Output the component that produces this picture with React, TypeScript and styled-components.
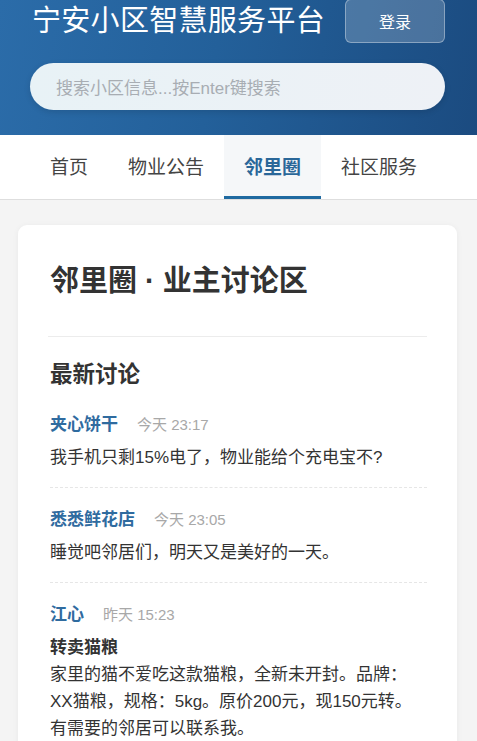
import React from "react";
import styled, { createGlobalStyle } from "styled-components";

const Global = createGlobalStyle`
  html, body { margin: 0; padding: 0; background: #f4f4f4; }
  body { font-family: "Liberation Sans", "Noto Sans CJK SC", sans-serif; color: #333; }
  * { box-sizing: border-box; }
`;

const Page = styled.div`
  width: 477px;
  height: 741px;
  background: #f4f4f4;
  overflow: hidden;
`;

const Header = styled.header`
  background: linear-gradient(100deg, #2b6ca9 0%, #23609a 45%, #1b4b80 100%);
  padding: 0 32px 25px 30px;
`;

const TitleRow = styled.div`
  display: flex;
  align-items: center;
  justify-content: space-between;
  height: 44px;
`;

const SiteTitle = styled.h1`
  margin: -2px 0 0 2px;
  font-size: 29px;
  font-weight: 400;
  line-height: 44px;
  color: #fff;
  letter-spacing: 0.3px;
`;

const LoginButton = styled.button`
  width: 100px;
  height: 44px;
  margin-top: -3px;
  border: 1px solid rgba(255, 255, 255, 0.35);
  border-radius: 6px;
  background: rgba(255, 255, 255, 0.2);
  color: #fff;
  font-family: inherit;
  font-size: 16px;
  padding: 0;
`;

const Search = styled.div`
  margin-top: 19px;
  height: 47px;
  border-radius: 24px;
  background: linear-gradient(90deg, #e8f2f6, #eef1f6);
  box-shadow: 0 2px 6px rgba(0, 0, 0, 0.12);
  display: flex;
  align-items: center;
  padding-left: 26px;
  font-size: 17px;
  color: #a8adb3;
`;

const Nav = styled.nav`
  display: flex;
  background: #fff;
  padding-left: 30px;
  border-bottom: 1px solid #dedede;
`;

const Tab = styled.div<{ $active?: boolean }>`
  height: 64px;
  padding: 0 20px;
  display: flex;
  align-items: center;
  font-size: 19px;
  color: ${(p) => (p.$active ? "#2a6799" : "#444")};
  font-weight: ${(p) => (p.$active ? 700 : 400)};
  background: ${(p) => (p.$active ? "#f5f7f9" : "transparent")};
  border-bottom: 3px solid ${(p) => (p.$active ? "#1f6aa1" : "transparent")};
`;

const Main = styled.main`
  padding: 25px 20px 0 18px;
`;

const Card = styled.section`
  background: #fff;
  border-radius: 9px;
  box-shadow: 0 1px 6px rgba(0, 0, 0, 0.05);
  padding: 36px 30px 20px 32px;
`;

const CardTitle = styled.h2`
  margin: 0;
  font-size: 29px;
  line-height: 40px;
  font-weight: 700;
  color: #333;
`;

const Divider = styled.hr`
  margin: 35px 0 0 -2px;
  border: none;
  border-top: 1px solid #ececec;
`;

const SectionTitle = styled.h3`
  margin: 22px 0 0;
  font-size: 22.5px;
  line-height: 32px;
  font-weight: 700;
  color: #333;
`;

const PostList = styled.div`
  margin-top: 21px;
`;

const Post = styled.article<{ $first?: boolean; $last?: boolean }>`
  padding: ${(p) => (p.$first ? "0" : "19px")} 0 16px;
  border-bottom: ${(p) => (p.$last ? "none" : "1px dashed #e6e6e6")};
`;

const Meta = styled.div`
  display: flex;
  align-items: baseline;
  gap: 19px;
  line-height: 26px;
`;

const Author = styled.span`
  font-size: 17px;
  font-weight: 700;
  color: #2f6b9f;
`;

const Time = styled.span`
  font-size: 15px;
  color: #a8a8a8;
`;

const Body = styled.div`
  margin-top: 6px;
  font-size: 17px;
  line-height: 27px;
  color: #333;
`;

const PostHeading = styled.div`
  font-weight: 700;
  color: #333;
`;

type PostData = {
  author: string;
  time: string;
  heading?: string;
  text: string;
};

const posts: PostData[] = [
  { author: "夹心饼干", time: "今天 23:17", text: "我手机只剩15%电了，物业能给个充电宝不?" },
  { author: "悉悉鲜花店", time: "今天 23:05", text: "睡觉吧邻居们，明天又是美好的一天。" },
  {
    author: "江心",
    time: "昨天 15:23",
    heading: "转卖猫粮",
    text: "家里的猫不爱吃这款猫粮，全新未开封。品牌：XX猫粮，规格：5kg。原价200元，现150元转。有需要的邻居可以联系我。",
  },
];

const tabs = ["首页", "物业公告", "邻里圈", "社区服务"];

export default function App() {
  return (
    <Page>
      <Global />
      <Header>
        <TitleRow>
          <SiteTitle>宁安小区智慧服务平台</SiteTitle>
          <LoginButton>登录</LoginButton>
        </TitleRow>
        <Search>搜索小区信息...按Enter键搜索</Search>
      </Header>
      <Nav>
        {tabs.map((t) => (
          <Tab key={t} $active={t === "邻里圈"}>
            {t}
          </Tab>
        ))}
      </Nav>
      <Main>
        <Card>
          <CardTitle>邻里圈 · 业主讨论区</CardTitle>
          <Divider />
          <SectionTitle>最新讨论</SectionTitle>
          <PostList>
            {posts.map((p, i) => (
              <Post key={i} $first={i === 0} $last={i === posts.length - 1}>
                <Meta>
                  <Author>{p.author}</Author>
                  <Time>{p.time}</Time>
                </Meta>
                <Body>
                  {p.heading && <PostHeading>{p.heading}</PostHeading>}
                  {p.text}
                </Body>
              </Post>
            ))}
          </PostList>
        </Card>
      </Main>
    </Page>
  );
}
